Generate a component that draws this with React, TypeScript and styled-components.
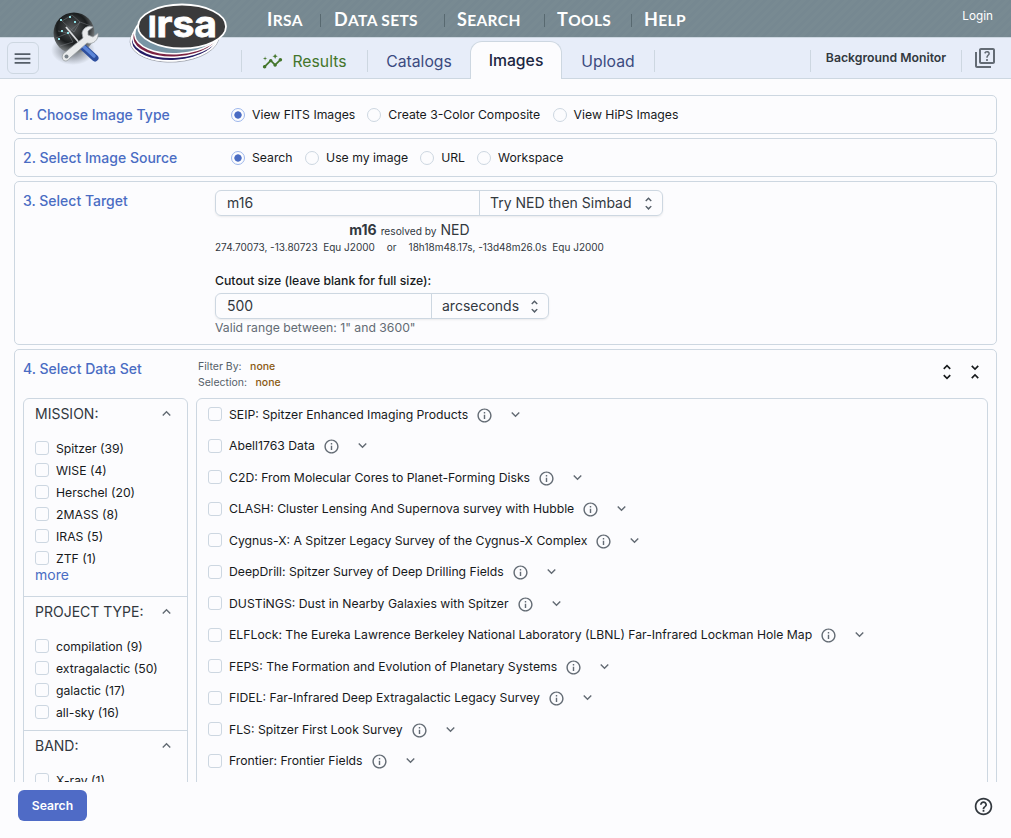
import React from 'react';
import styled, { createGlobalStyle } from 'styled-components';
import {
  MdExpandLess,
  MdExpandMore,
  MdHelpOutline,
  MdInfoOutline,
  MdInsights,
  MdMenu,
  MdOutlineQuiz,
  MdUnfoldLess,
  MdUnfoldMore,
} from 'react-icons/md';

const GlobalStyle = createGlobalStyle`
  *, *::before { box-sizing: border-box; }
  body {
    margin: 0;
    background: #fcfcfe;
    color: #171a1c;
    font-family: Inter, sans-serif;
    font-size: 13px;
  }
`;

const line = '#cdd7e1';
const blue = '#4a6cc3';

const Page = styled.div`
  display: flex;
  flex-direction: column;
  height: 838px;
  overflow: hidden;
  position: relative;
`;

const Banner = styled.header`
  height: 37px;
  flex: none;
  display: flex;
  padding-left: 267px;
  background: repeating-linear-gradient(135deg, #768891 0 3px, #788a92 3px 6px);
`;

const MenuItem = styled.span<{ $width: number }>`
  display: block;
  width: ${(p) => p.$width}px;
  padding-top: 8px;
  color: #fff;
  font: 700 15.5px/23px Lato, sans-serif;
  letter-spacing: 0.35px;
  text-transform: uppercase;
  white-space: nowrap;
  &::first-letter { font-size: 18px; }
`;

const MenuRule = styled.span`
  width: 1px;
  height: 13px;
  margin-top: 14px;
  background: #586970;
`;

const MenuGap = styled.span<{ $width: number }>`
  width: ${(p) => p.$width}px;
`;

const Login = styled.span`
  margin: 8px 18px 0 auto;
  color: #fff;
  font-size: 11.75px;
  line-height: 16px;
`;

const TabBar = styled.nav`
  height: 42px;
  flex: none;
  display: flex;
  align-items: flex-start;
  border-top: 1px solid ${line};
  border-bottom: 1px solid ${line};
  background: #e7edf9;
`;

const MenuButton = styled.button`
  width: 32px;
  height: 32px;
  margin: 4px 202px 0 7px;
  padding: 0 1px 0 0;
  display: grid;
  place-items: center;
  border: 1px solid ${line};
  border-radius: 6px;
  background: transparent;
  color: #555e68;
`;

const TabRule = styled.span`
  width: 1px;
  height: 22px;
  margin-top: 12px;
  background: ${line};
`;

const Tab = styled.span<{ $width: number; $color?: string }>`
  width: ${(p) => p.$width}px;
  height: 40px;
  padding-top: 6px;
  display: flex;
  align-items: center;
  justify-content: center;
  gap: 9px;
  color: ${(p) => p.$color ?? '#3b4a80'};
  font-size: 15.75px;
`;

const ActiveTab = styled(Tab)`
  height: 38px;
  margin-top: 3px;
  padding: 0;
  border: 1px solid ${line};
  border-bottom: 0;
  border-radius: 12px 12px 0 0;
  background: #fcfcfe;
  color: #1c2743;
  font-weight: 500;
`;

const TabTools = styled.div`
  margin-left: auto;
  display: flex;
  align-items: flex-start;
  color: #32383e;
`;

const Monitor = styled.span`
  width: 150px;
  padding-top: 11px;
  text-align: center;
  font-size: 12.25px;
  font-weight: 600;
  line-height: 17px;
`;

const QuizIcon = styled(MdOutlineQuiz)`
  margin: 8px 14px 0 11px;
  color: #636b74;
`;

const ToolLogo = styled.svg`
  position: absolute;
  left: 48px;
  top: 6px;
`;

const IrsaLogo = styled.svg`
  position: absolute;
  left: 128px;
  top: 2px;
`;

const Body = styled.main`
  height: 703px;
  flex: none;
  padding: 16px 14px 0;
  display: flex;
  flex-direction: column;
  gap: 4px;
  overflow: hidden;
`;

const Panel = styled.section<{ $height: number }>`
  height: ${(p) => p.$height}px;
  flex: none;
  padding: 8px;
  border: 1px solid ${line};
  border-radius: 5px;
`;

const Row = styled.div`
  display: flex;
`;

const Title = styled.h2<{ $width: number }>`
  width: ${(p) => p.$width}px;
  flex: none;
  margin: 0;
  color: ${blue};
  font-size: 14px;
  font-weight: 500;
  line-height: 22px;
`;

const Radio = styled.label<{ $gap: number }>`
  display: flex;
  align-items: center;
  height: 22px;
  margin-right: ${(p) => p.$gap}px;
  gap: 7px;
  font-size: 12.22px;
  line-height: 16px;
  white-space: nowrap;
`;

const Dot = styled.span<{ $on?: boolean }>`
  width: 14px;
  height: 14px;
  border: 1px solid ${(p) => (p.$on ? '#9db7ec' : line)};
  border-radius: 50%;
  background: ${(p) => (p.$on ? `radial-gradient(circle, ${blue} 3.3px, transparent 4px)` : 'transparent')};
`;

const Field = styled.div<{ $width: number }>`
  display: flex;
  width: ${(p) => p.$width}px;
  height: 26px;
  border: 1px solid ${line};
  border-radius: 6px;
  box-shadow: 0 1px 2px rgba(21, 21, 21, 0.08);
  color: #32383e;
  font-size: 14px;
  line-height: 24px;
`;

const FieldText = styled.span`
  flex: 1;
  padding-left: 11px;
`;

const FieldSelect = styled.span<{ $width: number }>`
  width: ${(p) => p.$width}px;
  padding: 0 5px 0 10px;
  display: flex;
  justify-content: space-between;
  align-items: center;
  border-left: 1px solid ${line};
  white-space: nowrap;
  svg { color: #555e68; }
`;

const Resolved = styled.div`
  width: 389px;
  height: 20px;
  margin-top: 4px;
  text-align: center;
  color: #32383e;
  font-size: 14px;
  line-height: 20px;
  b { font-weight: 700; }
  small { font-size: 10.2px; }
`;

const Coords = styled.div`
  display: flex;
  gap: 12px;
  color: #32383e;
  font-size: 10px;
  line-height: 14px;
  white-space: pre;
`;

const CutoutLabel = styled.div`
  margin: 19px 0 4px;
  font-size: 12.25px;
  font-weight: 500;
  line-height: 16px;
`;

const Hint = styled.div`
  margin-top: 1px;
  color: #636b74;
  font-size: 12.22px;
  line-height: 16px;
`;

const Summary = styled.div`
  flex: 1;
  padding-top: 1px;
  color: #555e68;
  font-size: 10.5px;
  line-height: 16px;
  b { margin-left: 8.5px; font-weight: 500; color: #8a5a12; }
`;

const FoldButtons = styled.div`
  display: flex;
  gap: 8px;
  padding: 4px 3px 0 0;
  color: #171a1c;
`;

const Columns = styled.div`
  display: flex;
  gap: 8px;
  margin-top: 7px;
`;

const Box = styled.div<{ $width: number }>`
  width: ${(p) => p.$width}px;
  height: 420px;
  border: 1px solid ${line};
  border-radius: 6px;
`;

const DataBox = styled(Box)`
  margin-top: -0.5px;
`;

const Group = styled.div<{ $height: number }>`
  height: ${(p) => p.$height}px;
  padding: 4px 11px 0;
  border-bottom: 1px solid ${line};
`;

const GroupHead = styled.div`
  display: flex;
  justify-content: space-between;
  align-items: center;
  height: 21px;
  margin-bottom: 13px;
  padding-right: 1px;
  color: #32383e;
  font-size: 14px;
  svg { color: #636b74; }
`;

const Check = styled.label`
  display: flex;
  align-items: center;
  gap: 7px;
  height: 22px;
  font-size: 12.22px;
  white-space: nowrap;
  &::before {
    content: '';
    width: 14px;
    height: 14px;
    flex: none;
    border: 1px solid ${line};
    border-radius: 3px;
  }
`;

const More = styled.a`
  display: block;
  margin-top: -3px;
  color: ${blue};
  font-size: 14px;
  line-height: 18px;
`;

const DataRow = styled.div`
  display: flex;
  align-items: center;
  height: 31.5px;
  padding-left: 11px;
  color: #636b74;
  label { color: #171a1c; }
`;

const InfoIcon = styled(MdInfoOutline)`
  margin: 2px 14px 0 8px;
`;

const Footer = styled.footer`
  flex: 1;
  display: flex;
  justify-content: space-between;
  padding: 8px 17px 0 18px;
`;

const SearchButton = styled.button`
  width: 69px;
  height: 31px;
  border: 0;
  border-radius: 6px;
  background: #4f6bc6;
  color: #fff;
  font: 600 12.2px Inter, sans-serif;
`;

const HelpIcon = styled(MdHelpOutline)`
  margin-top: 6px;
  color: #32383e;
`;

const menu = [
  { text: 'Irsa', width: 53, gap: 13 },
  { text: 'Data sets', width: 110, gap: 12 },
  { text: 'Search', width: 87, gap: 12 },
  { text: 'Tools', width: 74, gap: 12 },
];

const groups = [
  { name: 'MISSION:', height: 198, more: true, items: ['Spitzer (39)', 'WISE (4)', 'Herschel (20)', '2MASS (8)', 'IRAS (5)', 'ZTF (1)'] },
  { name: 'PROJECT TYPE:', height: 134, items: ['compilation (9)', 'extragalactic (50)', 'galactic (17)', 'all-sky (16)'] },
  { name: 'BAND:', height: 134, items: ['X-ray (1)'] },
];

const dataSets = [
  'SEIP: Spitzer Enhanced Imaging Products',
  'Abell1763 Data',
  'C2D: From Molecular Cores to Planet-Forming Disks',
  'CLASH: Cluster Lensing And Supernova survey with Hubble',
  'Cygnus-X: A Spitzer Legacy Survey of the Cygnus-X Complex',
  'DeepDrill: Spitzer Survey of Deep Drilling Fields',
  'DUSTiNGS: Dust in Nearby Galaxies with Spitzer',
  'ELFLock: The Eureka Lawrence Berkeley National Laboratory (LBNL) Far-Infrared Lockman Hole Map',
  'FEPS: The Formation and Evolution of Planetary Systems',
  'FIDEL: Far-Infrared Deep Extragalactic Legacy Survey',
  'FLS: Spitzer First Look Survey',
  'Frontier: Frontier Fields',
];

function Globe() {
  return (
    <ToolLogo width="56" height="60" viewBox="0 0 56 60">
      <defs>
        <radialGradient id="globe" cx="45%" cy="38%" r="62%">
          <stop offset="0" stopColor="#55595b" />
          <stop offset=".6" stopColor="#1a1d1e" />
          <stop offset="1" stopColor="#8b9092" />
        </radialGradient>
        <radialGradient id="shade">
          <stop offset="0" stopColor="#444a50" stopOpacity=".8" />
          <stop offset="1" stopColor="#444a50" stopOpacity="0" />
        </radialGradient>
      </defs>
      <ellipse cx="25" cy="44" rx="22" ry="15" fill="url(#shade)" />
      <circle cx="26" cy="27" r="20.5" fill="url(#globe)" />
      <g stroke="#888f92" strokeWidth=".6" fill="none" opacity=".7">
        <path d="M14 15 24 9 32 16 26 26 14 15M10 25 20 27 32 16 43 20M8 32 20 27 25 36 12 40" />
      </g>
      <g fill="#8ee0e6">
        <path d="M12 13h2v2h-2zM21 10h2v2h-2zM26 15h2v2h-2zM13 24h2v2h-2zM19 26h2v2h-2zM10 32h2v2h-2zM38 35h2v2h-2z" />
      </g>
      <path d="M18 21 33 39" stroke="#d9dcde" strokeWidth="1.8" />
      <path d="M35 41 47 52" stroke="#2d4f9e" strokeWidth="7" strokeLinecap="round" />
      <path d="M35 40 46 50" stroke="#5c86d8" strokeWidth="3.5" strokeLinecap="round" />
      <path
        d="M45 21C40 19 35 22 34 27L35 32 15 48C12 54 18 58 22 52L39 37C45 39 51 34 50 27L45 31 40 29 40 25Z"
        fill="#e9ebec"
        stroke="#989ea2"
        strokeWidth=".8"
      />
      <circle cx="18.5" cy="50.5" r="2" fill="#778087" />
    </ToolLogo>
  );
}

function Irsa() {
  return (
    <IrsaLogo width="102" height="64" viewBox="0 0 102 64">
      <ellipse cx="46.5" cy="37" rx="44.5" ry="23" fill="#fff" stroke="#777c86" strokeWidth=".6" transform="rotate(-4 46.5 37)" />
      <g stroke="#fff" strokeWidth="1.6">
        <ellipse cx="46.5" cy="36.5" rx="43.5" ry="22" fill="#251d65" transform="rotate(-4 46.5 36.5)" />
        <ellipse cx="48" cy="33" rx="43.5" ry="22" fill="#7b2342" transform="rotate(-4 48 33)" />
        <ellipse cx="50" cy="29.5" rx="43.5" ry="22" fill="#7895a5" transform="rotate(-4 50 29.5)" />
        <ellipse cx="54" cy="24.5" rx="44" ry="22" fill="#3a3a3b" strokeWidth="1.8" />
      </g>
      <text x="20" y="34.5" fill="#fff" stroke="#fff" strokeWidth=".8" fontFamily="Inter" fontWeight="700" fontSize="28" textLength="69" lengthAdjust="spacingAndGlyphs">
        I<tspan fontSize="36">rsa</tspan>
      </text>
    </IrsaLogo>
  );
}

export default function App() {
  return (
    <Page>
      <GlobalStyle />
      <Banner>
        {menu.map((m) => (
          <React.Fragment key={m.text}>
            <MenuItem $width={m.width}>{m.text}</MenuItem>
            <MenuRule />
            <MenuGap $width={m.gap} />
          </React.Fragment>
        ))}
        <MenuItem $width={60}>Help</MenuItem>
        <Login>Login</Login>
      </Banner>
      <TabBar>
        <MenuButton><MdMenu size={21} /></MenuButton>
        <TabRule />
        <Tab $width={125} $color="#44762c"><MdInsights size={21} />Results</Tab>
        <TabRule />
        <Tab $width={102}>Catalogs</Tab>
        <ActiveTab $width={92}>Images</ActiveTab>
        <Tab $width={92}>Upload</Tab>
        <TabRule />
        <TabTools>
          <TabRule />
          <Monitor>Background Monitor</Monitor>
          <TabRule />
          <QuizIcon size={24} />
        </TabTools>
      </TabBar>
      <Globe />
      <Irsa />
      <Body>
        <Panel $height={39}>
          <Row>
            <Title $width={208}>1. Choose Image Type</Title>
            <Radio $gap={12}><Dot $on />View FITS Images</Radio>
            <Radio $gap={12.5}><Dot />Create 3-Color Composite</Radio>
            <Radio $gap={0}><Dot />View HiPS Images</Radio>
          </Row>
        </Panel>
        <Panel $height={39}>
          <Row>
            <Title $width={208}>2. Select Image Source</Title>
            <Radio $gap={12.5}><Dot $on />Search</Radio>
            <Radio $gap={12}><Dot />Use my image</Radio>
            <Radio $gap={12}><Dot />URL</Radio>
            <Radio $gap={0}><Dot />Workspace</Radio>
          </Row>
        </Panel>
        <Panel $height={164}>
          <Row>
            <Title $width={192}>3. Select Target</Title>
            <div>
              <Field $width={448}>
                <FieldText>m16</FieldText>
                <FieldSelect $width={183}>Try NED then Simbad<MdUnfoldMore size={17} /></FieldSelect>
              </Field>
              <Resolved><b>m16</b> <small>resolved by</small> NED</Resolved>
              <Coords>
                <span>{'274.70073, -13.80723  Equ J2000'}</span>
                <span>or</span>
                <span>{'18h18m48.17s, -13d48m26.0s  Equ J2000'}</span>
              </Coords>
              <CutoutLabel>Cutout size (leave blank for full size):</CutoutLabel>
              <Field $width={334}>
                <FieldText>500</FieldText>
                <FieldSelect $width={117}>arcseconds<MdUnfoldMore size={17} /></FieldSelect>
              </Field>
              <Hint>Valid range between: 1" and 3600"</Hint>
            </div>
          </Row>
        </Panel>
        <Panel $height={480}>
          <Row>
            <Title $width={175}>4. Select Data Set</Title>
            <Summary>
              <div>Filter By:<b>none</b></div>
              <div>Selection:<b>none</b></div>
            </Summary>
            <FoldButtons>
              <MdUnfoldMore size={20} />
              <MdUnfoldLess size={20} />
            </FoldButtons>
          </Row>
          <Columns>
            <Box $width={165}>
              {groups.map((g) => (
                <Group key={g.name} $height={g.height}>
                  <GroupHead>{g.name}<MdExpandLess size={17} /></GroupHead>
                  {g.items.map((item) => <Check key={item}>{item}</Check>)}
                  {g.more && <More>more</More>}
                </Group>
              ))}
            </Box>
            <DataBox $width={792}>
              {dataSets.map((name) => (
                <DataRow key={name}>
                  <Check>{name}</Check>
                  <InfoIcon size={17} />
                  <MdExpandMore size={17} />
                </DataRow>
              ))}
            </DataBox>
          </Columns>
        </Panel>
      </Body>
      <Footer>
        <SearchButton>Search</SearchButton>
        <HelpIcon size={21} />
      </Footer>
    </Page>
  );
}
